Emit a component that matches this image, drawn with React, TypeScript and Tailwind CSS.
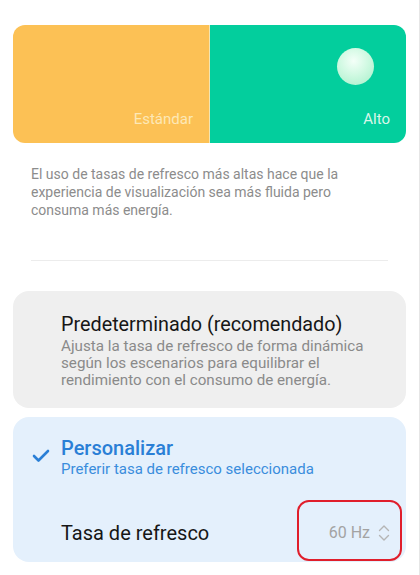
export default function App() {
  return (
    <div
      className="relative w-[420px] h-[575px] overflow-hidden bg-white border-r border-[#e6e6e6]"
      style={{ fontFamily: "Roboto, 'Noto Sans', Arial, sans-serif" }}
    >
      <div className="px-[13px] pt-[25px]">
        {/* top preview card */}
        <div className="flex h-[118px] rounded-[12px] overflow-hidden">
          <div className="w-[197px] bg-[#fcc155] flex flex-col justify-end items-end pr-[16px] pb-[14px] border-r border-[#f3e4b0]">
            <span className="text-[15px] leading-[20px] text-[#fde8b6]">Estándar</span>
          </div>
          <div className="flex-1 bg-[#03ce9d] flex flex-col justify-between items-end pt-[23px] pr-[16px] pb-[14px]">
            <div className="w-[37px] h-[37px] rounded-full mr-[16px] bg-[radial-gradient(circle_at_45%_35%,#f4fff8_0%,#d0f9e2_45%,#a4efc8_100%)]" />
            <span className="text-[15px] leading-[20px] text-[#d8f7ea]">Alto</span>
          </div>
        </div>

        {/* description */}
        <p className="mt-[22px] px-[18px] text-[14px] leading-[18px] text-[#8c8c8c]">
          El uso de tasas de refresco más altas hace que la experiencia de visualización sea más fluida pero consuma más energía.
        </p>

        <div className="mx-[18px] mt-[41px] h-px bg-[#ececec]" />

        {/* default option */}
        <div className="mt-[30px] rounded-[16px] bg-[#efefef] pl-[48px] pr-[16px] pt-[22px] pb-[19px]">
          <div className="text-[19.8px] leading-[24px] text-[#161616]">Predeterminado (recomendado)</div>
          <div className="mt-[1px] text-[15.2px] leading-[17px] text-[#8a8a8a]">
            Ajusta la tasa de refresco de forma dinámica según los escenarios para equilibrar el rendimiento con el consumo de energía.
          </div>
        </div>

        {/* custom option */}
        <div className="mt-[9px] rounded-[16px] bg-[#e4f0fc] h-[145px] flex flex-col">
          <div className="flex pt-[19px]">
            <div className="w-[48px] flex justify-center pt-[13px]">
              <svg width="18" height="14" viewBox="0 0 18 14" className="ml-[8px]">
                <path d="M2 7 L6.5 11.5 L16 2" fill="none" stroke="#2a7fd6" strokeWidth="2.6" strokeLinecap="round" strokeLinejoin="round" />
              </svg>
            </div>
            <div>
              <div className="text-[20px] leading-[24px] font-medium text-[#2a7fd6]">Personalizar</div>
              <div className="text-[15px] leading-[18px] text-[#3a8ddc]">Preferir tasa de refresco seleccionada</div>
            </div>
          </div>
          <div className="flex items-center justify-between pl-[48px] pr-[16px] mt-[43px]">
            <span className="text-[20px] leading-[24px] text-[#161616]">Tasa de refresco</span>
            <div className="flex items-center gap-[8px]">
              <span className="text-[16px] leading-[20px] text-[#a3a3a3]">60 Hz</span>
              <svg width="12" height="18" viewBox="0 0 12 18">
                <path d="M1.5 6.5 L6 2 L10.5 6.5" fill="none" stroke="#b5b5b5" strokeWidth="1.4" strokeLinecap="round" strokeLinejoin="round" />
                <path d="M1.5 11.5 L6 16 L10.5 11.5" fill="none" stroke="#b5b5b5" strokeWidth="1.4" strokeLinecap="round" strokeLinejoin="round" />
              </svg>
            </div>
          </div>
        </div>
      </div>

      {/* red annotation */}
      <div className="absolute left-[297px] top-[500px] w-[105px] h-[61px] rounded-[12px] border-2 border-[#e01e2b] pointer-events-none" />
    </div>
  );
}
